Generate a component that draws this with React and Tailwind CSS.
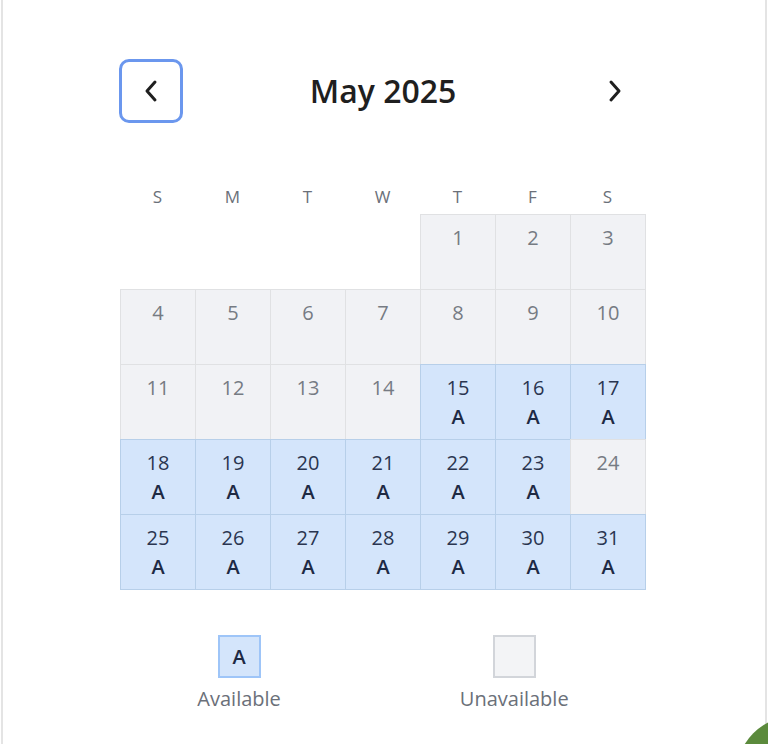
import React from "react";

const AVAILABLE = new Set([15, 16, 17, 18, 19, 20, 21, 22, 23, 25, 26, 27, 28, 29, 30, 31]);
const DAYS = ["S", "M", "T", "W", "T", "F", "S"];

const Chevron = ({ dir }) => (
  <svg width="16" height="24" viewBox="0 0 16 24" fill="none" stroke="#1f1f1f" strokeWidth="3" strokeLinecap="round" strokeLinejoin="round">
    {dir === "left" ? <polyline points="12,3 4,12 12,21" /> : <polyline points="4,3 12,12 4,21" />}
  </svg>
);

const DayCell = ({ day }) => {
  const ok = AVAILABLE.has(day);
  return (
    <div
      className={`-mr-px -mb-px border pt-[8px] text-center text-[20px] leading-[29px] ${
        ok ? "bg-[#d4e5fb] border-[#b7cfe9] text-[#2a3550]" : "bg-[#f1f2f5] border-[#e0e1e3] text-[#767b83]"
      }`}
    >
      <div>{day}</div>
      {ok && <div className="font-semibold text-[#1e2a44]">A</div>}
    </div>
  );
};

export default function App() {
  // May 2025 starts on a Thursday
  const blanks = Array.from({ length: 4 });
  const days = Array.from({ length: 31 }, (_, i) => i + 1);

  return (
    <div className="relative h-[744px] w-full overflow-hidden bg-white px-px font-['Open_Sans',sans-serif]">
      <div className="h-full border-x-2 border-[#e4e4e4] pt-[59px]">
        <div className="ml-[116px] w-[528px]">
          <div className="flex items-center justify-between">
            <button className="flex h-[64px] w-[64px] items-center justify-center rounded-[10px] border-[3px] border-[#6b97ee]">
              <Chevron dir="left" />
            </button>
            <h1 className="text-[32px] font-semibold leading-none text-[#1f1f1f]">May 2025</h1>
            <button className="flex h-[64px] w-[64px] items-center justify-center rounded-[10px] border-[3px] border-transparent">
              <Chevron dir="right" />
            </button>
          </div>

          <div className="ml-px mt-[62px] grid grid-cols-[repeat(7,75px)] text-center text-[17px] leading-[24px] text-[#6b7079]">
            {DAYS.map((d, i) => (
              <div key={i}>{d}</div>
            ))}
          </div>

          <div className="ml-px mt-[5px] grid grid-cols-[repeat(7,75px)] auto-rows-[75px]">
            {blanks.map((_, i) => (
              <div key={"b" + i} />
            ))}
            {days.map((d) => (
              <DayCell key={d} day={d} />
            ))}
          </div>

          <div className="mt-[46px] flex justify-center gap-[179px]">
            <div className="flex flex-col items-center">
              <div className="flex h-[43px] w-[43px] items-center justify-center border-2 border-[#9ec5f8] bg-[#d4e5fb] text-[20px] font-semibold text-[#1e2a44]">
                A
              </div>
              <div className="mt-[7px] text-[20px] leading-[28px] text-[#6b7079]">Available</div>
            </div>
            <div className="flex flex-col items-center">
              <div className="h-[43px] w-[43px] border-2 border-[#d2d5da] bg-[#f3f4f6]" />
              <div className="mt-[7px] text-[20px] leading-[28px] text-[#6b7079]">Unavailable</div>
            </div>
          </div>
        </div>
      </div>
      <div className="absolute -bottom-[90px] -right-[86px] h-[118px] w-[118px] rounded-full bg-[#5b8a3c]" />
    </div>
  );
}
